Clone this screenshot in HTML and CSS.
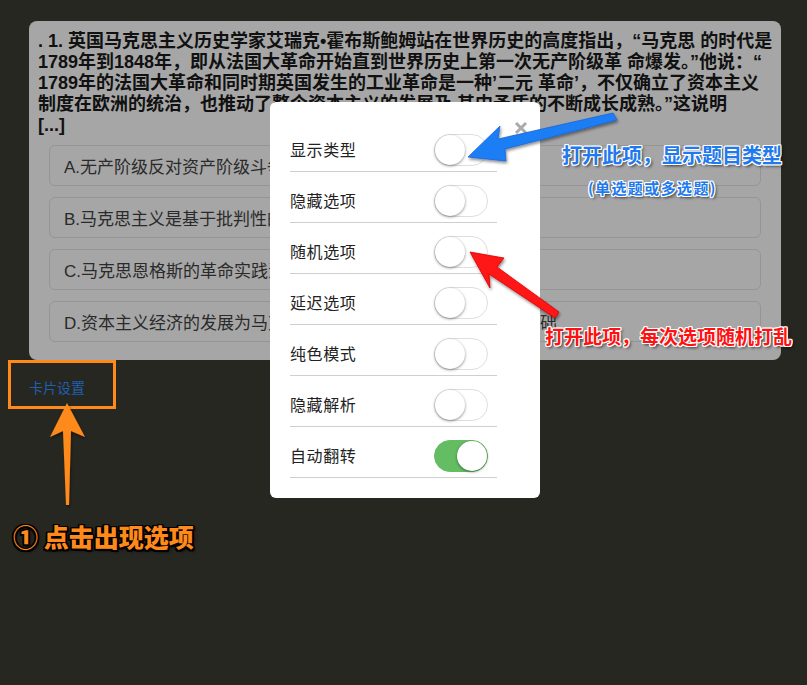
FILE: index.html
```html
<!DOCTYPE html>
<html lang="zh-CN">
<head>
<meta charset="utf-8">
<title>卡片设置</title>
<link rel="stylesheet" href="styles.css">
</head>
<body>
<div class="page">
  <div class="card">
    <div class="question">
      <span class="qline">. 1. 英国马克思主义历史学家艾瑞克•霍布斯鲍姆站在世界历史的高度指出，“马克思 的时代是</span>
      <span class="qline">1789年到1848年，即从法国大革命开始直到世界历史上第一次无产阶级革 命爆发。”他说：“</span>
      <span class="qline">1789年的法国大革命和同时期英国发生的工业革命是一种’二元 革命’，不仅确立了资本主义</span>
      <span class="qline">制度在欧洲的统治，也推动了整个资本主义的发展及 其中矛盾的不断成长成熟。”这说明</span>
      <span class="qline">[...]</span>
    </div>
    <div class="options">
      <div class="option">A.无产阶级反对资产阶级斗争的需要</div>
      <div class="option">B.马克思主义是基于批判性的科学</div>
      <div class="option">C.马克思恩格斯的革命实践活动</div>
      <div class="option">D.资本主义经济的发展为马克思主义的产生提供了经济、社会基础</div>
    </div>
  </div>
  <a class="settings-link">卡片设置</a>
</div>

<div class="modal">
  <svg class="close" width="14" height="14" viewBox="0 0 14 14"><path d="M2 2 L12 12 M12 2 L2 12" stroke="#ababab" stroke-width="3" stroke-linecap="butt"/></svg>
  <div class="row"><span class="label">显示类型</span><span class="toggle"><span class="knob"></span></span></div>
  <div class="row"><span class="label">隐藏选项</span><span class="toggle"><span class="knob"></span></span></div>
  <div class="row"><span class="label">随机选项</span><span class="toggle"><span class="knob"></span></span></div>
  <div class="row"><span class="label">延迟选项</span><span class="toggle"><span class="knob"></span></span></div>
  <div class="row"><span class="label">纯色模式</span><span class="toggle"><span class="knob"></span></span></div>
  <div class="row"><span class="label">隐藏解析</span><span class="toggle"><span class="knob"></span></span></div>
  <div class="row"><span class="label">自动翻转</span><span class="toggle on"><span class="knob"></span></span></div>
</div>

<div class="orange-box"></div>

<svg class="arrows" width="807" height="685" viewBox="0 0 807 685">
  <defs>
    <filter id="sh" x="-20%" y="-20%" width="140%" height="140%">
      <feDropShadow dx="1" dy="2" stdDeviation="1.5" flood-color="#000" flood-opacity="0.45"/>
    </filter>
  </defs>
  <polygon filter="url(#sh)" fill="#1f7ef5" stroke="#1565d8" stroke-width="0.8" points="468,157 500,126 498,139 613,113 617,120 505,149 506,161"/>
  <polygon filter="url(#sh)" fill="#ff1414" stroke="#d80000" stroke-width="0.8" points="470,252 504,258 497,267 559,312 555,318 489,274 490,288"/>
  <polygon filter="url(#sh)" fill="#ff8a1a" points="67,403 85,437 71,431 69,505 66,505 63,431 50,437"/>
</svg>

<div class="note note-blue">打开此项，显示题目类型</div>
<div class="note note-blue-sub">(单选题或多选题)</div>
<div class="note note-red">打开此项，每次选项随机打乱</div>
<div class="note note-orange">① 点击出现选项</div>
</body>
</html>
```

FILE: styles.css
```css
html, body {
  margin: 0;
  padding: 0;
}
body {
  background: #272722;
  width: 807px;
  height: 685px;
  position: relative;
  overflow: hidden;
  font-family: "Liberation Sans", "Noto Sans CJK SC", sans-serif;
}
.page {
  padding: 21px 26px 0 29px;
}
.card {
  background: #a6a6a6;
  border-radius: 8px;
  padding: 10px 9px 18px 9px;
  height: 311px;
}
.question {
  font-weight: bold;
  font-size: 18px;
  line-height: 21px;
  color: #111;
}
.qline {
  display: block;
  white-space: nowrap;
}
.options {
  margin: 9px 11px 0 11px;
  display: flex;
  flex-direction: column;
  gap: 11px;
}
.option {
  height: 39px;
  border: 1px solid #959595;
  border-radius: 6px;
  padding-left: 14px;
  display: flex;
  align-items: center;
  font-size: 17px;
  color: #2a2a2a;
  white-space: nowrap;
  overflow: hidden;
}
.settings-link {
  display: block;
  margin-top: 19px;
  font-size: 14px;
  line-height: 18px;
  color: #1e5fae;
}
.modal {
  position: absolute;
  left: 270px;
  top: 102px;
  width: 207px;
  height: 357px;
  padding: 19px 43px 20px 20px;
  background: #fff;
  border-radius: 6px;
}
.close {
  position: absolute;
  left: 244px;
  top: 19px;
}
.row {
  height: 42px;
  padding: 8px 9px 0 0;
  border-bottom: 1px solid #cfcfcf;
  display: flex;
  align-items: center;
}
.label {
  font-family: "Noto Sans CJK SC", sans-serif;
  font-size: 16px;
  line-height: 20px;
  letter-spacing: 0.6px;
  color: #222;
  margin-top: -2px;
}
.toggle {
  margin-left: auto;
  width: 52px;
  height: 30px;
  border: 1px solid #dedede;
  border-radius: 16px;
  background: #fff;
  position: relative;
}
.knob {
  position: absolute;
  left: 0;
  top: 0;
  width: 30px;
  height: 30px;
  border-radius: 50%;
  background: #fff;
  box-shadow: 0 1px 3px rgba(0, 0, 0, 0.45);
}
.toggle.on {
  background: #64bd63;
  border-color: #64bd63;
}
.toggle.on .knob {
  left: 22px;
}
.orange-box {
  position: absolute;
  left: 8px;
  top: 360px;
  width: 102px;
  height: 43px;
  border: 3px solid #ff8a1a;
}
.arrows {
  position: absolute;
  left: 0;
  top: 0;
}
.note {
  position: absolute;
  white-space: nowrap;
  font-family: "Noto Sans CJK SC", sans-serif;
  font-weight: bold;
}
.note-blue {
  left: 562px;
  top: 142px;
  font-size: 20px;
  line-height: 26px;
  color: #2079ee;
  text-shadow: 1px 0 0 #fff, -1px 0 0 #fff, 0 1px 0 #fff, 0 -1px 0 #fff, 1px 1px 0 #fff, -1px -1px 0 #fff, 1px -1px 0 #fff, -1px 1px 0 #fff, 2px 2px 3px rgba(0, 0, 0, 0.7);
}
.note-blue-sub {
  left: 588px;
  top: 178px;
  font-size: 15px;
  line-height: 20px;
  letter-spacing: 1.4px;
  color: #2079ee;
  text-shadow: 1px 0 0 #fff, -1px 0 0 #fff, 0 1px 0 #fff, 0 -1px 0 #fff, 1px 1px 0 #fff, -1px -1px 0 #fff, 1px -1px 0 #fff, -1px 1px 0 #fff, 2px 2px 3px rgba(0, 0, 0, 0.7);
}
.note-red {
  left: 545px;
  top: 324px;
  font-size: 19px;
  line-height: 24px;
  color: #ff1111;
  text-shadow: 1px 0 0 #fff, -1px 0 0 #fff, 0 1px 0 #fff, 0 -1px 0 #fff, 1px 1px 0 #fff, -1px -1px 0 #fff, 1px -1px 0 #fff, -1px 1px 0 #fff, 2px 2px 3px rgba(0, 0, 0, 0.7);
}
.note-orange {
  left: 13px;
  top: 520px;
  font-size: 25px;
  font-weight: 900;
  line-height: 32px;
  color: #ff8a1a;
  text-shadow: 1.5px 0 0 #000, -1.5px 0 0 #000, 0 1.5px 0 #000, 0 -1.5px 0 #000, 1.5px 1.5px 0 #000, -1.5px -1.5px 0 #000, 1.5px -1.5px 0 #000, -1.5px 1.5px 0 #000, 2px 2px 3px rgba(0, 0, 0, 0.8);
}
```
